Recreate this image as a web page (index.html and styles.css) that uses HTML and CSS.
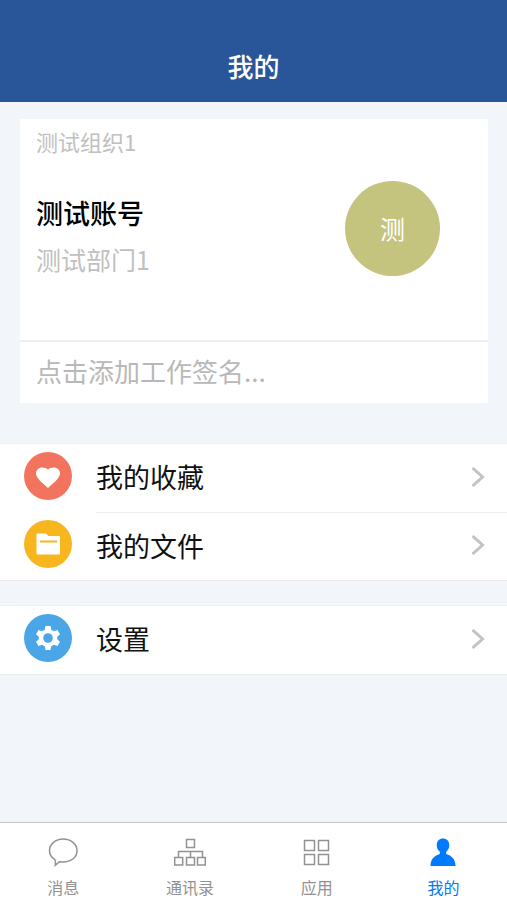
FILE: index.html
```html
<!DOCTYPE html>
<html lang="zh-CN">
<head>
<meta charset="utf-8">
<meta name="viewport" content="width=device-width, initial-scale=1">
<title>我的</title>
<link rel="stylesheet" href="styles.css">
</head>
<body>
<header class="header"><h1 class="title">我的</h1></header>
<main class="content">
  <section class="card">
    <p class="org">测试组织1</p>
    <div class="profile">
      <div>
        <h2 class="name">测试账号</h2>
        <p class="dept">测试部门1</p>
      </div>
      <div class="avatar">测</div>
    </div>
    <button class="signature" type="button">点击添加工作签名...</button>
  </section>
  <nav class="group">
    <a class="item" href="#favorites">
      <svg class="badge" viewBox="0 0 48 48" aria-hidden="true"><circle cx="24" cy="24" r="24" fill="#f2745f"/><path d="M24 36C20 32 12 26.500 12 21.500C12 18 14.800 15.500 18 15.500C20.800 15.500 23 16.200 24 17.500C25 16.200 27.200 15.500 30 15.500C33.200 15.500 36 18 36 21.500C36 26.500 28 32 24 36Z" fill="#fff"/></svg>
      <span class="label">我的收藏</span>
      <svg class="chevron" viewBox="0 0 14 20" aria-hidden="true"><path d="M1.500 1L11.500 10L1.500 19"/></svg>
    </a>
    <a class="item" href="#files">
      <svg class="badge" viewBox="0 0 48 48" aria-hidden="true"><circle cx="24" cy="24" r="24" fill="#f7b51e"/><path d="M13.500 13.500H22L24.500 16H35Q36 16 36 17V33.500Q36 34.500 35 34.500H13.500Q12.500 34.500 12.500 33.500V14.500Q12.500 13.500 13.500 13.500Z" fill="#fff"/><path d="M16 21.500H33" stroke="#f7b51e" stroke-width="2"/></svg>
      <span class="label">我的文件</span>
      <svg class="chevron" viewBox="0 0 14 20" aria-hidden="true"><path d="M1.500 1L11.500 10L1.500 19"/></svg>
    </a>
  </nav>
  <nav class="group">
    <a class="item" href="#settings">
      <svg class="badge" viewBox="0 0 48 48" aria-hidden="true"><circle cx="24" cy="24" r="24" fill="#4ba6e8"/><path d="M21.500 12H26.500L27.300 15.800L29.800 17.200L33.500 16L36 20.300L33.200 22.800V25.200L36 27.700L33.500 32L29.800 30.800L27.300 32.200L26.500 36H21.500L20.700 32.200L18.200 30.800L14.500 32L12 27.700L14.800 25.200V22.800L12 20.300L14.500 16L18.200 17.200L20.700 15.800Z" fill="#fff"/><circle cx="24" cy="24" r="4.800" fill="#4ba6e8"/></svg>
      <span class="label">设置</span>
      <svg class="chevron" viewBox="0 0 14 20" aria-hidden="true"><path d="M1.500 1L11.500 10L1.500 19"/></svg>
    </a>
  </nav>
</main>
<nav class="tabs">
  <a class="tab" href="#messages">
    <svg class="icon" viewBox="0 0 32 32" aria-hidden="true"><path d="M7.800 24.500C4.500 22.500 2.500 19.500 2.500 15.700C2.500 9.200 8.500 4 16.200 4S30 9.200 30 15.700S24 27 16.200 27C14.900 27 13.700 26.900 12.600 26.700L8.300 30.200Q8.800 27 7.800 24.500Z"/></svg>
    <span>消息</span>
  </a>
  <a class="tab" href="#contacts">
    <svg class="icon" viewBox="0 0 32 32" aria-hidden="true"><path d="M12.500 4.500H20.500V12.500H12.500ZM.700 22.500H8.700V30H.700ZM12.500 22.500H20.500V30H12.500ZM23.500 22.500H31.300V30H23.500ZM4.500 22.500V16.500H28.500V22.500M16.500 16.500V22.500"/></svg>
    <span>通讯录</span>
  </a>
  <a class="tab" href="#apps">
    <svg class="icon" viewBox="0 0 32 32" aria-hidden="true"><path d="M3.500 5.500H13.500V15.500H3.500ZM17.500 5.500H27.500V15.500H17.500ZM3.500 19.500H13.500V29.500H3.500ZM17.500 19.500H27.500V29.500H17.500Z"/></svg>
    <span>应用</span>
  </a>
  <a class="tab active" href="#me" aria-current="page">
    <svg class="icon" viewBox="0 0 32 32" aria-hidden="true"><path d="M15 3.500C18.700 3.500 21.300 6.200 21.300 10.200C21.300 12.800 20 15.300 18.200 16.800V19C23.500 20.700 27.500 24 27.500 31H2.500C2.500 24 6.500 20.700 11.800 19V16.800C10 15.300 8.700 12.800 8.700 10.200C8.700 6.200 11.300 3.500 15 3.500Z"/></svg>
    <span>我的</span>
  </a>
</nav>
</body>
</html>
```
FILE: styles.css
```css
* {
  box-sizing: border-box;
}

body {
  margin: 0;
  min-height: 100vh;
  display: flex;
  flex-direction: column;
  background: #f2f5f9;
  color: #111;
  font-family: "Noto Sans CJK SC", sans-serif;
}

h1, h2, p {
  margin: 0;
}

a {
  color: inherit;
  text-decoration: none;
}

.header {
  padding: 46px 0 16px;
  background: #295599;
  color: #fff;
  text-align: center;
}

.title {
  font-size: 26px;
  line-height: 40px;
  font-weight: 500;
}

.content {
  flex: 1;
}

.card {
  margin: 17px 19px 40px 20px;
  background: #fff;
}

.org {
  padding: 6px 16px 2px;
  color: #c0c0c0;
  font-size: 22px;
  line-height: 32px;
}

.profile {
  display: flex;
  justify-content: space-between;
  padding: 22px 48px 63px 16px;
}

.name {
  padding-top: 12px;
  color: #000;
  font-size: 27px;
  line-height: 40px;
  font-weight: 500;
}

.dept {
  padding-top: 8px;
  color: #c0c0c0;
  font-size: 25px;
  line-height: 36px;
}

.avatar {
  width: 95px;
  height: 95px;
  border-radius: 50%;
  background: #c4c47f;
  color: #fff;
  font-size: 25px;
  line-height: 95px;
  text-align: center;
}

.signature {
  display: block;
  width: 100%;
  padding: 10px 16px 13px;
  border: 0;
  border-top: 2px solid #eee;
  background: none;
  color: #b8b8b8;
  font: 26px/38px "Noto Sans CJK SC", sans-serif;
  text-align: left;
}

.group {
  margin-bottom: 24px;
  border-top: 1px solid #eff0f1;
  border-bottom: 1px solid #eaecee;
  background: #fff;
}

.item {
  display: grid;
  grid-template-columns: 72px 1fr;
  align-items: center;
  height: 68px;
  padding-left: 24px;
  position: relative;
}

.badge {
  width: 48px;
  height: 48px;
  margin-bottom: 4px;
}

.label {
  height: 100%;
  font-size: 27px;
  line-height: 66px;
}

.item + .item .label {
  border-top: 1px solid #eee;
}

.chevron {
  position: absolute;
  right: 22px;
  width: 14px;
  height: 20px;
  margin-bottom: 2px;
  fill: none;
  stroke: #c3c3c3;
  stroke-width: 3;
}

.tabs {
  display: grid;
  grid-template-columns: repeat(4, 1fr);
  height: 78px;
  padding-top: 12px;
  border-top: 1px solid #c4c5c8;
  background: #fff;
}

.tab {
  display: flex;
  flex-direction: column;
  align-items: center;
  gap: 8px;
  color: #929292;
  font-size: 16px;
  line-height: 24px;
}

.icon {
  width: 32px;
  height: 32px;
  fill: none;
  stroke: currentColor;
  stroke-width: 1.5;
}

.active {
  color: #007aff;
}

.active .icon {
  fill: currentColor;
  stroke: none;
}
```
